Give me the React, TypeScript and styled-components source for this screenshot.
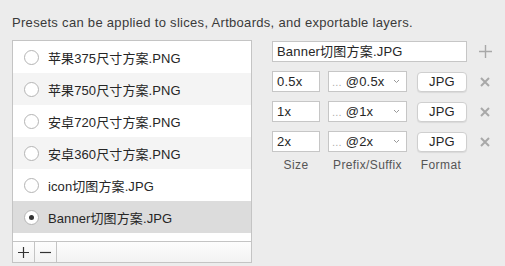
import styled, { createGlobalStyle } from "styled-components";

const GlobalStyle = createGlobalStyle`
  html, body {
    margin: 0;
    padding: 0;
    background: #ececec;
  }
  body {
    font-family: "Liberation Sans", "Noto Sans CJK SC", Arial, sans-serif;
    color: #262626;
    -webkit-font-smoothing: antialiased;
  }
`;

const Page = styled.div`
  width: 505px;
  height: 266px;
  padding: 14px 12px 0;
  box-sizing: border-box;
`;

const Hint = styled.p`
  margin: 0;
  font-size: 13px;
  line-height: 18px;
  letter-spacing: 0.3px;
  color: #3a3a3a;
`;

const Columns = styled.div`
  display: flex;
  align-items: flex-start;
  gap: 20px;
  margin-top: 8px;
`;

const ListBox = styled.div`
  width: 242px;
  height: 223px;
  box-sizing: border-box;
  border: 1px solid #c4c4c4;
  background: #fff;
  display: flex;
  flex-direction: column;
`;

const Rows = styled.div`
  flex: 1;
`;

const Row = styled.div<{ $alt: boolean; $selected: boolean }>`
  height: 32px;
  display: flex;
  align-items: center;
  padding-left: 11px;
  gap: 9px;
  font-size: 13px;
  letter-spacing: 0.1px;
  background: ${(p) => (p.$selected ? "#dcdcdc" : p.$alt ? "#f4f4f4" : "#fff")};
`;

const Radio = styled.span<{ $on: boolean }>`
  width: 15px;
  height: 15px;
  box-sizing: border-box;
  border-radius: 50%;
  border: 1px solid #b4b4b4;
  background: #fff;
  display: flex;
  align-items: center;
  justify-content: center;

  &::after {
    content: "";
    display: ${(p) => (p.$on ? "block" : "none")};
    width: 5px;
    height: 5px;
    border-radius: 50%;
    background: #333;
  }
`;

const Toolbar = styled.div`
  height: 20px;
  border-top: 1px solid #c4c4c4;
  background: linear-gradient(#fdfdfd, #f3f3f3);
  display: flex;
`;

const ToolButton = styled.button`
  width: 22px;
  height: 20px;
  padding: 0;
  border: none;
  border-right: 1px solid #c4c4c4;
  background: transparent;
  display: flex;
  align-items: center;
  justify-content: center;
`;

const Settings = styled.div`
  display: flex;
  flex-direction: column;
  gap: 9px;
  margin-top: 1px;
`;

const Line = styled.div`
  display: flex;
  align-items: center;
  gap: 8px;
`;

const Field = styled.div<{ $w: number }>`
  width: ${(p) => p.$w}px;
  height: 21px;
  box-sizing: border-box;
  border: 1px solid #c6c6c6;
  background: #fff;
  font-size: 13px;
  line-height: 19px;
  letter-spacing: 0.2px;
  padding-left: 4px;
  white-space: nowrap;
`;

const Select = styled.div`
  width: 79px;
  height: 21px;
  box-sizing: border-box;
  border: 1px solid #c6c6c6;
  background: #fff;
  font-size: 13px;
  letter-spacing: 0.2px;
  display: flex;
  align-items: center;
  padding: 0 6px 0 3px;
`;

const Ellipsis = styled.span`
  color: #b0b0b0;
  font-size: 11px;
  margin-right: 4px;
`;

const Chevron = styled.span`
  margin-left: auto;
  display: flex;
`;

const FormatButton = styled.div`
  width: 50px;
  height: 20px;
  box-sizing: border-box;
  border: 1px solid #cfcfcf;
  border-radius: 4px;
  background: #fff;
  box-shadow: 0 1px 1px rgba(0, 0, 0, 0.08);
  font-size: 13px;
  letter-spacing: 0.2px;
  display: flex;
  align-items: center;
  justify-content: center;
  margin-left: 2px;
`;

const IconSlot = styled.span`
  width: 16px;
  display: flex;
  justify-content: center;
  margin-left: 2px;
`;

const Labels = styled.div`
  display: flex;
  gap: 8px;
  margin-top: -3px;
  font-size: 12px;
  letter-spacing: 0.4px;
  color: #555;
`;

const Label = styled.span<{ $w: number }>`
  width: ${(p) => p.$w}px;
  text-align: center;
`;

const presets = [
  "苹果375尺寸方案.PNG",
  "苹果750尺寸方案.PNG",
  "安卓720尺寸方案.PNG",
  "安卓360尺寸方案.PNG",
  "icon切图方案.JPG",
  "Banner切图方案.JPG",
];

const sizes = [
  { size: "0.5x", suffix: "@0.5x" },
  { size: "1x", suffix: "@1x" },
  { size: "2x", suffix: "@2x" },
];

const Plus = ({ color = "#333", s = 11 }: { color?: string; s?: number }) => (
  <svg width={s} height={s} viewBox="0 0 11 11">
    <path d="M5.5 0V11M0 5.5H11" stroke={color} strokeWidth="1.2" />
  </svg>
);

const Cross = () => (
  <svg width="10" height="10" viewBox="0 0 10 10">
    <path d="M1 1L9 9M9 1L1 9" stroke="#a8a8a8" strokeWidth="2" />
  </svg>
);

export default function App() {
  return (
    <Page>
      <GlobalStyle />
      <Hint>Presets can be applied to slices, Artboards, and exportable layers.</Hint>
      <Columns>
        <ListBox>
          <Rows>
            {presets.map((name, i) => (
              <Row key={name} $alt={i % 2 === 1} $selected={i === 5}>
                <Radio $on={i === 5} />
                {name}
              </Row>
            ))}
          </Rows>
          <Toolbar>
            <ToolButton>
              <Plus />
            </ToolButton>
            <ToolButton>
              <svg width="11" height="11" viewBox="0 0 11 11">
                <path d="M0 5.5H11" stroke="#333" strokeWidth="1.2" />
              </svg>
            </ToolButton>
          </Toolbar>
        </ListBox>
        <Settings>
          <Line>
            <Field $w={195}>Banner切图方案.JPG</Field>
            <IconSlot>
              <Plus color="#a8a8a8" s={13} />
            </IconSlot>
          </Line>
          {sizes.map((r) => (
            <Line key={r.size}>
              <Field $w={48}>{r.size}</Field>
              <Select>
                <Ellipsis>...</Ellipsis>
                {r.suffix}
                <Chevron>
                  <svg width="7" height="5" viewBox="0 0 7 5">
                    <path d="M1 1L3.5 3.5L6 1" stroke="#999" strokeWidth="1" fill="none" />
                  </svg>
                </Chevron>
              </Select>
              <FormatButton>JPG</FormatButton>
              <IconSlot>
                <Cross />
              </IconSlot>
            </Line>
          ))}
          <Labels>
            <Label $w={48}>Size</Label>
            <Label $w={79}>Prefix/Suffix</Label>
            <Label $w={52}>Format</Label>
          </Labels>
        </Settings>
      </Columns>
    </Page>
  );
}
